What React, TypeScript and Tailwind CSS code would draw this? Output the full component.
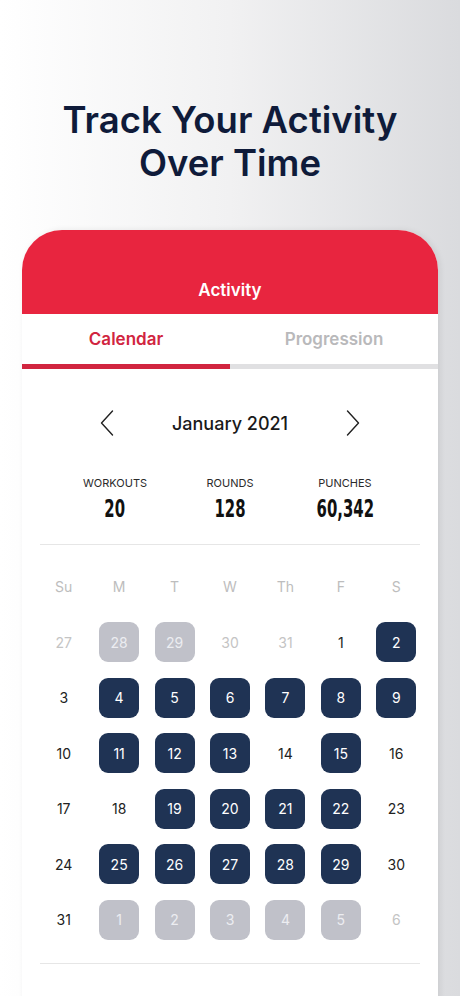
type Day = {
  n: number;
  kind: "muted" | "plain" | "done" | "future";
};

const weekdays = ["Su", "M", "T", "W", "Th", "F", "S"];

const done = new Set([2, 4, 5, 6, 7, 8, 9, 11, 12, 13, 15, 19, 20, 21, 22, 25, 26, 27, 28, 29]);

const days: Day[] = [
  { n: 27, kind: "muted" },
  { n: 28, kind: "future" },
  { n: 29, kind: "future" },
  { n: 30, kind: "muted" },
  { n: 31, kind: "muted" },
  ...Array.from({ length: 31 }, (_, i): Day => ({
    n: i + 1,
    kind: done.has(i + 1) ? "done" : "plain",
  })),
  ...[1, 2, 3, 4, 5].map((n): Day => ({ n, kind: "future" })),
  { n: 6, kind: "muted" },
];

const stats = [
  { label: "WORKOUTS", value: "20" },
  { label: "ROUNDS", value: "128" },
  { label: "PUNCHES", value: "60,342" },
];

// thin tall chevron, the lucide one is too stubby
function Chevron({ dir }: { dir: "left" | "right" }) {
  return (
    <svg width="24" height="26" viewBox="0 0 24 26" fill="none" className="text-[#222]">
      <path
        d={dir === "left" ? "M17.5 1 L6.5 13 L17.5 25" : "M6.5 1 L17.5 13 L6.5 25"}
        stroke="currentColor"
        strokeWidth="1.4"
        strokeLinecap="round"
        strokeLinejoin="round"
      />
    </svg>
  );
}

function DayCell({ day }: { day: Day }) {
  if (day.kind === "done" || day.kind === "future") {
    return (
      <div className="flex h-[55.5px] items-center justify-center">
        <span
          className={
            day.kind === "done"
              ? "flex h-10 w-10 items-center justify-center rounded-[9px] bg-[#1f3354] text-[14px] text-white"
              : "flex h-10 w-10 items-center justify-center rounded-[9px] bg-[#c0c1c9] text-[14px] text-[#ecedf1]"
          }
        >
          {day.n}
        </span>
      </div>
    );
  }
  return (
    <div
      className={`flex h-[55.5px] items-center justify-center text-[14px] ${
        day.kind === "muted" ? "text-[#c4c4c4]" : "text-[#222222]"
      }`}
    >
      {day.n}
    </div>
  );
}

export default function App() {
  return (
    <div
      className="h-[996px] w-[460px] overflow-hidden bg-gradient-to-r from-white via-[#f1f1f2] to-[#dadbde]"
      style={{ fontFamily: "Inter, 'Noto Sans', sans-serif" }}
    >
      <h1 className="pt-[99px] text-center text-[36.5px] leading-[43px] font-semibold text-[#0f1b3a]">
        Track Your Activity
        <br />
        Over Time
      </h1>

      <section className="mx-[22px] mt-[45px] h-[800px] overflow-hidden rounded-t-[40px] bg-white shadow-[2px_0_6px_rgba(0,0,0,0.08)]">
        <header className="flex h-[84px] items-end justify-center bg-[#e8253f] pb-[11px]">
          <span className="text-[17px] font-semibold text-white">Activity</span>
        </header>

        <nav className="grid grid-cols-2">
          <div className="flex h-[50px] items-center justify-center pt-[2px] text-[17px] font-semibold text-[#d1253f]">
            Calendar
          </div>
          <div className="flex h-[50px] items-center justify-center pt-[2px] text-[17px] font-semibold text-[#b9b9bb]">
            Progression
          </div>
          <div className="h-[5px] bg-[#d1253f]" />
          <div className="h-[5px] bg-[#e0e0e2]" />
        </nav>

        <div className="mx-auto mt-[35px] grid h-[38px] w-[270px] grid-cols-[24px_1fr_24px] items-center">
          <Chevron dir="left" />
          <span className="text-center text-[18px] font-medium text-[#1a1a1a]">January 2021</span>
          <Chevron dir="right" />
        </div>

        <div className="mx-auto mt-[34px] grid w-[345px] grid-cols-3">
          {stats.map((s) => (
            <div key={s.label} className="flex flex-col items-center">
              <span className="text-[11px] leading-[14px] text-[#2a2a2a]">{s.label}</span>
              <span
                className="mt-[4px] inline-block scale-x-[0.62] text-[24px] leading-[30px] font-bold text-[#111]"
                style={{ fontFamily: "'DejaVu Sans', sans-serif" }}
              >
                {s.value}
              </span>
            </div>
          ))}
        </div>

        <div className="mx-[18px] mt-[20px] h-px bg-[#e6e6e6]" />

        <div className="mx-auto mt-[14px] grid w-[388px] grid-cols-7">
          {weekdays.map((w) => (
            <div key={w} className="flex h-[55.5px] items-center justify-center text-[14px] text-[#bdbdbd]">
              {w}
            </div>
          ))}
          {days.map((d, i) => (
            <DayCell key={i} day={d} />
          ))}
        </div>

        <div className="mx-[18px] mt-[15px] h-px bg-[#e6e6e6]" />
      </section>
    </div>
  );
}
